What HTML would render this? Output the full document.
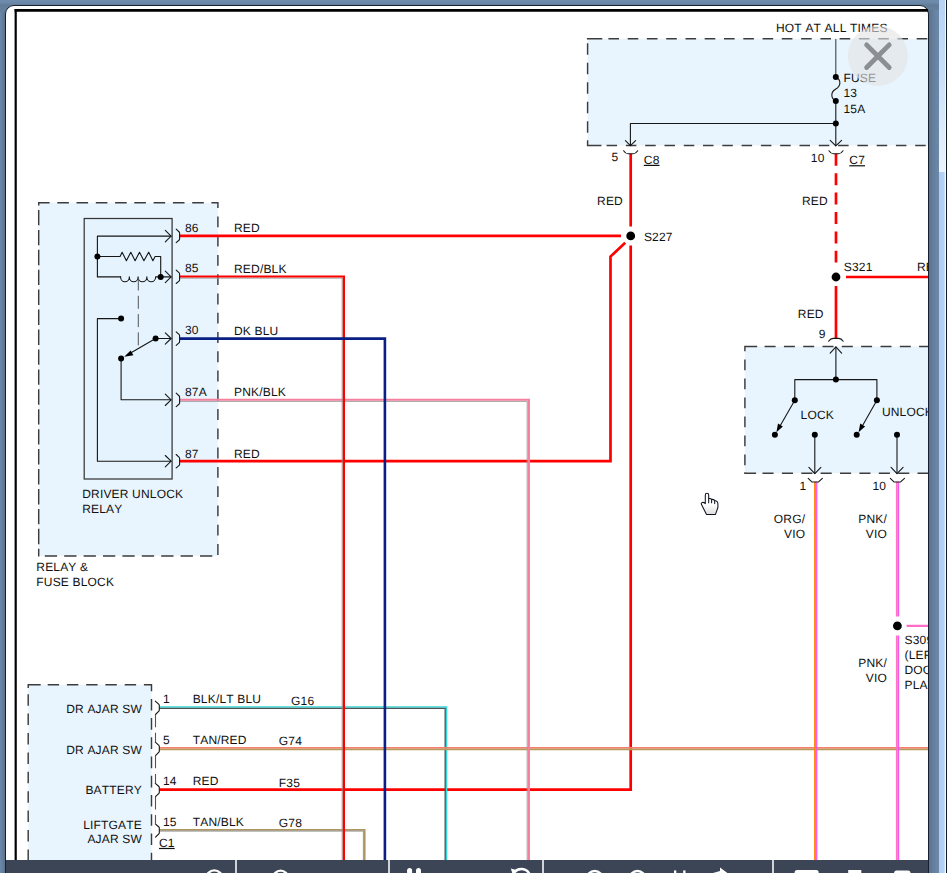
<!DOCTYPE html>
<html lang="en">
<head>
<meta charset="utf-8">
<title>Wiring Diagram Viewer</title>
<style>
html,body{margin:0;padding:0;}
body{width:947px;height:873px;overflow:hidden;position:relative;background:#6b88aa;font-family:"Liberation Sans",Arial,sans-serif;}
#bg{position:absolute;left:0;top:0;width:947px;height:873px;background:linear-gradient(to bottom,#6f8cad 0px,#6b88a8 3px,#627c99 5px,#66829f 14px,#66829f 100%);}
#leftstrip{position:absolute;left:0;top:12px;width:5px;height:861px;background:linear-gradient(to right,#6c89ab,#5b7590);}
#rightstrip{position:absolute;left:929px;top:10px;width:9.8px;height:863px;background:linear-gradient(to right,#5c738e,#6985a5 70%,#6b88a8);}
#scroll{position:absolute;left:938.7px;top:0;width:6.6px;height:873px;background:linear-gradient(to right,#adcef2,#b3d2f4 75%,#d4e5fa);}
#scroll i{position:absolute;left:0;top:0;width:100%;height:172px;background:linear-gradient(to bottom,#b6d3f5 0,#c4dcf7 60px,#e9f2fd 165px,#e9f2fd 172px);display:block;}
#scrolledge{position:absolute;left:945.3px;top:0;width:1.7px;height:873px;background:linear-gradient(to right,#f4f8fd 0,#f4f8fd 0.6px,#101c22 0.6px);}
#panel{position:absolute;left:5px;top:5px;width:922px;height:880px;background:#fff;border:1px solid #16202e;border-radius:9px 9px 0 0;box-sizing:content-box;}
#dia{position:absolute;left:0;top:0;}
#toolbar{position:absolute;left:6px;top:860px;width:922px;height:13px;background:#3b4555;overflow:hidden;}
#toolbar b{position:absolute;top:0;width:2px;height:13px;background:#cfd3d8;display:block;}
#toolbar svg{position:absolute;left:0;top:0;}
text{font-family:"Liberation Sans",Arial,sans-serif;font-size:12px;fill:#101010;font-kerning:none;text-rendering:geometricPrecision;letter-spacing:0.18px;}
.u{text-decoration:underline;}
</style>
</head>
<body>
<div id="bg"></div>
<div id="leftstrip"></div>
<div id="rightstrip"></div>
<div id="scroll"><i></i></div>
<div id="scrolledge"></div>
<div id="panel"></div>
<svg id="dia" width="947" height="873" viewBox="0 0 947 873">
<defs>
<linearGradient id="hg" x1="0" y1="0" x2="0" y2="1"><stop offset="0.55" stop-color="#fff"/><stop offset="1" stop-color="#dcdcdc"/></linearGradient>
<clipPath id="cp"><rect x="6" y="6" width="922" height="854"/></clipPath>
</defs>
<g clip-path="url(#cp)">
<!--FRAME-->
<path d="M15.7 873 V9" fill="none" stroke="#000" stroke-width="2.2"/><path d="M14.6 10.3 H947" fill="none" stroke="#000" stroke-width="2.8"/>
<!--BOXES-->
<g fill="#e8f5fe" stroke="none">
<rect x="587.6" y="38.7" width="380" height="106.8"/>
<rect x="38.7" y="202.8" width="179.2" height="353.1"/>
<rect x="744.9" y="346.5" width="220" height="126.8"/>
<rect x="28.2" y="684.8" width="123.3" height="200"/>
</g>
<g fill="none" stroke="#3c3c3c" stroke-width="1.45">
<path d="M38.0 202.8H49.6M57.3 202.8H68.9M76.5 202.8H88.1M95.8 202.8H107.4M115.1 202.8H126.7M134.3 202.8H145.9M153.6 202.8H165.2M172.9 202.8H184.5M192.2 202.8H203.8M211.4 202.8H218.6M217.9 202.8V208.0M217.9 216.4V227.3M217.9 235.7V246.6M217.9 254.9V265.8M217.9 274.2V285.1M217.9 293.5V304.4M217.9 312.8V323.6M217.9 332.0V342.9M217.9 351.3V362.2M217.9 370.6V381.5M217.9 389.8V400.7M217.9 409.1V420.0M217.9 428.4V439.3M217.9 447.6V458.5M217.9 466.9V477.8M217.9 486.2V497.1M217.9 505.4V516.3M217.9 524.7V535.6M217.9 544.0V554.9M217.9 202.8V207.8M38.7 202.8V205.4M38.7 209.9V225.3M38.7 229.9V245.3M38.7 249.8V265.2M38.7 269.7V285.1M38.7 289.6V305.0M38.7 309.6V325.0M38.7 329.5V344.9M38.7 349.4V364.8M38.7 369.4V384.8M38.7 389.3V404.7M38.7 409.2V424.6M38.7 429.2V444.6M38.7 449.1V464.5M38.7 469.0V484.4M38.7 489.0V504.4M38.7 508.9V524.3M38.7 528.8V544.2M38.7 548.7V556.6M44.8 555.9H57.1M64.2 555.9H76.5M83.6 555.9H95.9M103.0 555.9H115.3M122.4 555.9H134.7M141.8 555.9H154.1M161.2 555.9H173.5M180.6 555.9H192.9M200.0 555.9H212.3"/>
<path d="M589.1 38.7H599.7M608.4 38.7H619.0M627.7 38.7H638.3M646.9 38.7H657.5M666.2 38.7H676.8M685.5 38.7H696.1M704.7 38.7H715.3M724.0 38.7H734.6M743.3 38.7H753.9M762.6 38.7H773.2M781.8 38.7H792.4M801.1 38.7H811.7M820.4 38.7H831.0M839.6 38.7H850.2M858.9 38.7H869.5M878.2 38.7H888.8M897.4 38.7H908.0M916.7 38.7H927.3M586.9 38.7H602.3M587.6 145.5H597.8M606.6 145.5H617.1M625.9 145.5H636.4M645.2 145.5H655.7M664.5 145.5H675.0M683.8 145.5H694.3M703.0 145.5H713.5M722.3 145.5H732.8M741.6 145.5H752.1M760.9 145.5H771.4M780.2 145.5H790.7M799.5 145.5H810.0M818.8 145.5H829.3M838.1 145.5H848.6M857.4 145.5H867.9M876.7 145.5H887.2M895.9 145.5H906.4M915.2 145.5H925.7M934.5 145.5H935.0M586.9 145.5H601.4M587.6 43.2V54.7M587.6 62.7V74.2M587.6 82.2V93.7M587.6 101.7V113.2M587.6 121.2V132.7M587.6 140.7V145.5M587.6 140.3V146.2M745.3 346.5H756.3M764.6 346.5H775.6M783.9 346.5H794.9M803.2 346.5H814.2M822.5 346.5H833.5M841.8 346.5H852.8M861.1 346.5H872.1M880.5 346.5H891.5M899.8 346.5H910.8M919.1 346.5H930.1M744.2 346.5H757.2M744.9 473.3H754.2M762.5 473.3H773.6M781.9 473.3H793.0M801.3 473.3H812.4M820.6 473.3H831.7M840.0 473.3H851.1M859.4 473.3H870.5M878.8 473.3H889.9M898.2 473.3H909.3M917.5 473.3H928.6M744.2 473.3H756.1M744.9 346.5V351.2M744.9 359.6V370.2M744.9 378.6V389.2M744.9 397.6V408.2M744.9 416.6V427.2M744.9 435.6V446.2M744.9 454.6V465.2M744.9 346.5V350.8M744.9 472.3V474.0M28.5 684.8H39.9M47.7 684.8H59.1M66.9 684.8H78.3M86.2 684.8H97.6M105.4 684.8H116.8M124.7 684.8H136.1M143.9 684.8H151.5M27.5 684.8H40.7M143.9 684.8H152.2M151.5 684.8V691.3M151.5 698.9V710.5M151.5 718.1V729.7M151.5 737.3V748.9M151.5 756.6V768.2M151.5 775.8V787.4M151.5 795.0V806.6M151.5 814.2V825.8M151.5 833.4V845.0M151.5 852.7V864.3M151.5 684.8V691.3M28.2 684.8V686.3M28.2 694.2V705.7M28.2 713.6V725.1M28.2 733.0V744.5M28.2 752.4V763.9M28.2 771.8V783.3M28.2 791.2V802.7M28.2 810.6V822.1M28.2 830.0V841.5M28.2 849.4V860.9M28.2 868.8V870.0M28.2 684.8V688.0"/>
</g>
<rect x="84.2" y="218.5" width="87.9" height="260.5" fill="#e4f3fd" stroke="#363636" stroke-width="1.25"/>
<!--WIRES-->
<g fill="none" stroke-width="2.7" stroke-linejoin="miter">
<!-- horizontals first -->
<g stroke="#ff0000">
<path d="M179.8 235.9 H621"/>
<path d="M179.8 461.2 H610.5 V256.6 L625.2 242.8"/>
<path d="M630.7 153.8 V226.5"/>
<path d="M159.5 789.7 H630.7 V245.4"/>
<path d="M836 153.8 V262.4" stroke-dasharray="12 7.4"/>
<path d="M846 277 H947"/>
<path d="M836 286 V338.6"/>
</g>
<!-- BLK/LT BLU -->
<path d="M159.5 708.2 H445.2 V873" stroke="#4c5458" stroke-width="1.4"/>
<path d="M159.5 706.9 H446.6 V873" stroke="#35d6d6" stroke-width="1.4"/>
<!-- TAN/RED -->
<path d="M159.5 747.8 H947" stroke="#f5806c" stroke-width="1.7"/>
<path d="M159.5 749.4 H947" stroke="#b39a5a" stroke-width="1.5"/>
<!-- TAN/BLK -->
<path d="M159.5 829.8 H364.7 V873" stroke="#ad9660" stroke-width="1.7"/>
<path d="M159.5 831.1 H363.4 V873" stroke="#8a8a8a" stroke-width="0.9"/>
<!-- PNK/BLK -->
<path d="M179.8 401.3 H527.2 V873" stroke="#9a9a9a" stroke-width="1"/>
<path d="M179.8 399.7 H528.9 V873" stroke="#f5809e" stroke-width="2.1"/>
<!-- RED/BLK -->
<path d="M179.8 278.1 H342.2 V873" stroke="#9a9a9a" stroke-width="1"/>
<path d="M179.8 276.5 H343.9 V873" stroke="#ff0000" stroke-width="2.2"/>
<!-- DK BLU -->
<path d="M179.8 338.6 H384.9 V873" stroke="#0a1f84" stroke-width="2.6"/>
<!-- ORG/VIO -->
<path d="M815.05 481.7 V873" stroke="#ff8a12" stroke-width="2.1"/>
<path d="M816.75 481.7 V873" stroke="#f550f0" stroke-width="1.3"/>
<!-- PNK/VIO -->
<path d="M896.8 481.7 V616.6 M896.8 635.4 V873" stroke="#ff74bd" stroke-width="1.8"/>
<path d="M898.45 481.7 V616.6 M898.45 635.4 V873" stroke="#f05af0" stroke-width="1.5"/>
<path d="M906.6 625.85 H947" stroke="#ff6ec7" stroke-width="2.3"/>
</g>
<!--SYMBOLS-->
<g fill="none" stroke="#161616" stroke-width="1.1" stroke-linecap="round" stroke-linejoin="round">
<!-- fuse block internals -->
<path d="M835.8 39.4 V77" stroke="#444"/>
<path d="M835.8 77 C841.5 80 841 86 835.8 89 C830.5 92 830.5 98 835.8 101.1" stroke="#1a1a1a"/>
<path d="M835.8 101.1 V145.6"/>
<path d="M835.8 123.5 H630.4 V145.6"/>
<path d="M625.4 140.6 L630.4 145.6 L635.6 140.6"/>
<path d="M830.2 140.4 L835.8 145.8 L841.6 140.4"/>
<!-- cups under fuse block -->
<path d="M623.6 150.8 Q625.5 153.8 628 153.8 H633.3 Q635.8 153.8 637.7 150.8"/>
<path d="M829 150.8 Q830.9 153.8 833.4 153.8 H838.6 Q841.1 153.8 843 150.8"/>
<!-- switch block cup (inverted) and arrow up -->
<path d="M828.6 341.2 Q830.6 338.4 833.2 338.4 H838.7 Q841.3 338.4 843.2 341.2"/>
<path d="M835.9 347 V379.6"/>
<path d="M830.2 353.2 L835.9 346.9 L841.6 353.2"/>
<path d="M794.8 400.3 V379.6 H876.9 V400.3"/>
<path d="M794.8 400.3 L778.6 428.4"/>
<path d="M876.9 400.3 L860.9 428.4"/>
<path d="M814.8 434.8 V473.4"/>
<path d="M897 434.8 V473.4"/>
<path d="M808.9 467.4 L814.8 473.6 L820.9 467.4"/>
<path d="M891.1 467.4 L897 473.6 L903.1 467.4"/>
<!-- cups under switch block -->
<path d="M808.2 478.3 L811.6 481.7 Q812 482 812.5 482 H817.9 Q818.4 482 818.8 481.7 L822.4 478.3"/>
<path d="M890.3 478.3 L893.7 481.7 Q894.1 482 894.6 482 H900 Q900.5 482 900.9 481.7 L904.5 478.3"/>
<!-- relay internals -->
<path d="M171 236.1 H97.4 V276.9 H120.6"/>
<path d="M97.4 256.5 H120.1 L122.1 252.2 L126.4 260.7 L130.8 252.2 L135.1 260.7 L139.5 252.2 L143.9 260.7 L148.7 252.2 L152.9 260.7 L155.1 256.5 H160.7 V276.9"/>
<path d="M120.6 276.9 A4.37 4.9 0 0 0 129.35 276.9 A4.37 4.9 0 0 0 138.1 276.9 A4.37 4.9 0 0 0 146.85 276.9 A4.37 4.9 0 0 0 155.6 276.9 H171"/>
<path d="M138.3 277.5 V346.5" stroke="#555" stroke-width="1" stroke-dasharray="13 5.3" stroke-linecap="butt"/>
<path d="M121.1 318.6 H97.4 V461.2 H171"/>
<path d="M155.6 338.5 H171"/>
<path d="M155.6 338.5 L128 354.6"/>
<path d="M121.1 358.6 V399.8 H171"/>
<path d="M165.3 230.4 L171.1 236.1 L165.3 241.8"/>
<path d="M165.3 271.2 L171.1 276.9 L165.3 282.6"/>
<path d="M165.3 332.8 L171.1 338.5 L165.3 344.2"/>
<path d="M165.3 394.1 L171.1 399.8 L165.3 405.5"/>
<path d="M165.3 455.5 L171.1 461.2 L165.3 466.9"/>
<!-- relay connector parens -->
<path d="M176.2 229.2 L179.2 232.0 Q179.6 232.4 179.6 233.0 V239.1 Q179.6 239.7 179.2 240.0 L176.2 242.6"/>
<path d="M176.2 270.1 L179.2 272.9 Q179.6 273.3 179.6 273.9 V280.0 Q179.6 280.6 179.2 280.9 L176.2 283.5"/>
<path d="M176.2 331.9 L179.2 334.7 Q179.6 335.1 179.6 335.7 V341.8 Q179.6 342.4 179.2 342.7 L176.2 345.3"/>
<path d="M176.2 393.2 L179.2 396.0 Q179.6 396.4 179.6 397.0 V403.1 Q179.6 403.7 179.2 404.0 L176.2 406.6"/>
<path d="M176.2 454.5 L179.2 457.3 Q179.6 457.7 179.6 458.3 V464.4 Q179.6 465.0 179.2 465.3 L176.2 467.9"/>
<!-- bottom-left connector brackets -->
<path d="M155.3 701.1 L158.9 704.3 Q159.3 704.7 159.3 705.3 V710.1 Q159.3 710.7 158.9 711.1 L155.5 714.5"/>
<path d="M155.3 742.2 L158.9 745.4 Q159.3 745.8 159.3 746.4 V751.2 Q159.3 751.8 158.9 752.2 L155.5 755.6"/>
<path d="M155.3 783.3 L158.9 786.5 Q159.3 786.9 159.3 787.5 V792.3 Q159.3 792.9 158.9 793.3 L155.5 796.7"/>
<path d="M155.3 823.8 L158.9 827.0 Q159.3 827.4 159.3 828.0 V832.8 Q159.3 833.4 158.9 833.8 L155.5 837.2"/>
<path d="M155.5 714.5 V742.2" stroke="#555" stroke-width="1.1" stroke-dasharray="12.7 5.6" stroke-linecap="butt"/>
<path d="M155.5 755.6 V783.3" stroke="#555" stroke-width="1.1" stroke-dasharray="12.7 5.6" stroke-linecap="butt"/>
<path d="M155.5 796.7 V823.8" stroke="#555" stroke-width="1.1" stroke-dasharray="12.7 5.6" stroke-linecap="butt"/>
</g>
<g fill="#000" stroke="none">
<!-- small dots -->
<circle cx="835.8" cy="77" r="3"/>
<circle cx="835.8" cy="101.1" r="3"/>
<circle cx="835.8" cy="123.5" r="3"/>
<circle cx="835.9" cy="379.6" r="3"/>
<circle cx="794.8" cy="400.3" r="3"/>
<circle cx="876.9" cy="400.3" r="3"/>
<circle cx="774.9" cy="434.8" r="3"/>
<circle cx="814.8" cy="434.8" r="3"/>
<circle cx="856.7" cy="434.8" r="3"/>
<circle cx="897" cy="434.8" r="3"/>
<circle cx="97.4" cy="256.5" r="3"/>
<circle cx="160.7" cy="276.9" r="3"/>
<circle cx="121.1" cy="318.6" r="3"/>
<circle cx="155.6" cy="338.5" r="3"/>
<circle cx="121.1" cy="358.6" r="3"/>
<!-- filled arrowheads on switch arms -->
<path d="M776.4 432.2 L778 423.6 L782.9 426.4 Z"/>
<path d="M858.6 432.2 L860.2 423.6 L865.1 426.4 Z"/>
<path d="M124.2 356.8 L130.6 350.4 L133.4 355.2 Z"/>
</g>
<!-- splice dots with white halo -->
<g fill="#000" stroke="#fff" stroke-width="1.6">
<circle cx="630.7" cy="235.9" r="5.2"/>
<circle cx="836" cy="277" r="5.2"/>
<circle cx="897.4" cy="625.9" r="5.2"/>
</g>
<!--TEXT-->
<text x="776" y="31.7">HOT AT ALL TIMES</text>
<text x="843.5" y="81.5">FUSE</text>
<text x="843.5" y="96.9">13</text>
<text x="843.5" y="112.6">15A</text>
<text x="611.6" y="161.3">5</text>
<text x="643.8" y="163.8" class="u">C8</text>
<text x="810.8" y="161.8">10</text>
<text x="849.3" y="164.2" class="u">C7</text>
<text x="597.1" y="204.6">RED</text>
<text x="802" y="204.6">RED</text>
<text x="643.9" y="240.5">S227</text>
<text x="843.8" y="270.7">S321</text>
<text x="917" y="270.7">RED</text>
<text x="797.8" y="317.8">RED</text>
<text x="818.7" y="337.7">9</text>
<text x="800.6" y="419.3">LOCK</text>
<text x="881.9" y="416.3">UNLOCK</text>
<text x="799.4" y="489.6">1</text>
<text x="872.5" y="489.6">10</text>
<text x="805.2" y="522.6" text-anchor="end">ORG/</text>
<text x="805.2" y="537.7" text-anchor="end">VIO</text>
<text x="887" y="522.6" text-anchor="end">PNK/</text>
<text x="887" y="537.7" text-anchor="end">VIO</text>
<text x="904.5" y="643.6">S309</text>
<text x="904.5" y="659.1">(LEFT</text>
<text x="904.5" y="673.7">DOOR</text>
<text x="904.5" y="688.5">PLATE)</text>
<text x="887" y="666.7" text-anchor="end">PNK/</text>
<text x="887" y="681.5" text-anchor="end">VIO</text>
<text x="185" y="231.5">86</text>
<text x="185" y="272.4">85</text>
<text x="185" y="333.7">30</text>
<text x="185" y="395.6">87A</text>
<text x="185" y="457.6">87</text>
<text x="234" y="231.7">RED</text>
<text x="234" y="272.6">RED/BLK</text>
<text x="234" y="334.6">DK BLU</text>
<text x="234" y="395.7">PNK/BLK</text>
<text x="234" y="457.6">RED</text>
<text x="82.2" y="497.9">DRIVER UNLOCK</text>
<text x="82.2" y="512.8">RELAY</text>
<text x="36.3" y="570.8">RELAY &amp;</text>
<text x="36.3" y="585.9">FUSE BLOCK</text>
<text x="142" y="712.6" text-anchor="end">DR AJAR SW</text>
<text x="142" y="753.5" text-anchor="end">DR AJAR SW</text>
<text x="142" y="793.9" text-anchor="end">BATTERY</text>
<text x="142" y="828.8" text-anchor="end">LIFTGATE</text>
<text x="142" y="843.4" text-anchor="end">AJAR SW</text>
<text x="163" y="702.9">1</text>
<text x="163" y="743.8">5</text>
<text x="163" y="784.6">14</text>
<text x="163" y="826">15</text>
<text x="159" y="846.9" class="u">C1</text>
<text x="192.7" y="703">BLK/LT BLU</text>
<text x="192.7" y="744">TAN/RED</text>
<text x="192.7" y="784.6">RED</text>
<text x="192.7" y="826">TAN/BLK</text>
<text x="291.1" y="704.7">G16</text>
<text x="278.8" y="745.4">G74</text>
<text x="278.8" y="786.5">F35</text>
<text x="278.8" y="827.4">G78</text>
</g>
<!--OVERLAY-->
<circle cx="877.9" cy="55.9" r="30" fill="rgba(228,228,228,0.62)"/>
<path d="M866.6 44.9 L889.2 67.5 M889.2 44.9 L866.6 67.5" stroke="#8b8f93" stroke-width="4.8" stroke-linecap="round" fill="none"/>
<g stroke="#10131f" stroke-width="1.05" stroke-linejoin="round" stroke-linecap="round">
<path d="M705.3 503.6 V495 Q705.3 493.3 707 493.3 Q708.7 493.3 708.7 495 V498.5 Q711 498.2 711.6 499.4 Q714 499.3 714.7 500.6 Q717.9 501 717.9 504 V507.5 L715.5 514.4 H706.5 L701.5 504.6 Q700.7 502.8 702.4 502.4 Q704 502.1 705.3 503.6 Z" fill="url(#hg)"/>
<path d="M708.7 498.5 V502.7 M711.6 499.4 V502.7 M714.7 500.6 V503.6" fill="none"/>
</g>
</svg>
<div id="toolbar"><b style="left:229px"></b><b style="left:382.2px"></b><b style="left:536.2px"></b><b style="left:766.3px"></b>
<svg width="922" height="13" viewBox="6 860 922 13">
<g fill="none" stroke="#fff" stroke-width="2.4">
<circle cx="214.3" cy="878.6" r="8.2"/>
<circle cx="280.6" cy="878" r="7.4"/>
<circle cx="594.7" cy="879" r="8"/>
<circle cx="637.5" cy="879" r="8"/>
<path d="M514 873 A9 9 0 0 1 529.5 874"/>
</g>
<g fill="#fff" stroke="none">
<circle cx="409.6" cy="870.6" r="2.5"/><rect x="407.1" y="870.6" width="5" height="4"/>
<circle cx="418.5" cy="870.6" r="2.5"/><rect x="416" y="870.6" width="5" height="4"/>
<path d="M510.8 868.6 L517.5 870.2 L512.6 874 Z"/>
<rect x="674" y="870.4" width="2.3" height="4"/>
<rect x="683.2" y="870.4" width="2.3" height="4"/>
<path d="M720 867.6 L727.4 873 H713 L720 871 Z"/>
<rect x="794.6" y="870" width="24.1" height="8" rx="2.5"/>
<rect x="848.2" y="870" width="13.1" height="8"/>
<rect x="894.1" y="870.4" width="16.4" height="8" rx="2.5"/>
</g>
</svg></div>
</body>
</html>
